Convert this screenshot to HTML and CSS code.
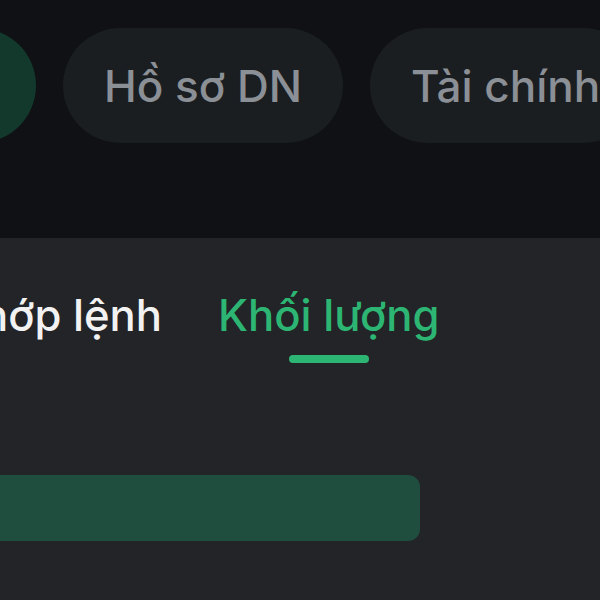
FILE: index.html
```html
<!DOCTYPE html>
<html lang="vi">
<head>
<meta charset="utf-8">
<link rel="stylesheet" href="styles.css">
</head>
<body>
<div class="screen">
  <header class="top">
    <nav class="pills">
      <span class="pill pill-active">Tổng quan</span>
      <span class="pill">Hồ sơ DN</span>
      <span class="pill">Tài chính</span>
    </nav>
  </header>
  <section class="panel">
    <div class="tabs">
      <div class="tab">Khớp lệnh</div>
      <div class="tab tab-active">Khối lượng<span class="tab-line"></span></div>
    </div>
    <div class="bars">
      <div class="bar" style="width: 420px"></div>
    </div>
  </section>
</div>
</body>
</html>
```

FILE: styles.css
```css
html, body {
  margin: 0;
  padding: 0;
  background: #222427;
}
.screen {
  width: 600px;
  height: 600px;
  overflow: hidden;
  font-family: Inter, "Noto Sans", sans-serif;
}
.top {
  height: 238px;
  background: #0f1114;
  box-sizing: border-box;
  padding-top: 28px;
}
.pills {
  display: flex;
  gap: 27px;
  margin-left: -264px;
  white-space: nowrap;
}
.pill {
  flex: none;
  height: 115px;
  border-radius: 58px;
  padding: 0 41px;
  background: #1b1e21;
  color: #8b8f96;
  font-size: 44px;
  font-weight: 500;
  display: flex;
  align-items: center;
}
.pill-active {
  background: #13392c;
  color: #2db673;
  width: 300px;
  box-sizing: border-box;
  justify-content: center;
}
.panel {
  background: #222427;
  height: 362px;
}
.tabs {
  display: flex;
  gap: 56px;
  margin-left: -48px;
  padding-top: 50px;
  white-space: nowrap;
}
.tab {
  font-size: 43.6px;
  font-weight: 500;
  color: #f2f2f2;
  line-height: 56px;
  display: flex;
  flex-direction: column;
  align-items: center;
}
.tab-active {
  color: #2db673;
}
.tab-line {
  display: block;
  width: 80px;
  height: 8px;
  border-radius: 4px;
  background: #2db673;
  margin-top: 11px;
}
.bars {
  padding-top: 112px;
}
.bar {
  height: 66px;
  background: #1f4d3e;
  border-radius: 0 12px 12px 0;
}
```
